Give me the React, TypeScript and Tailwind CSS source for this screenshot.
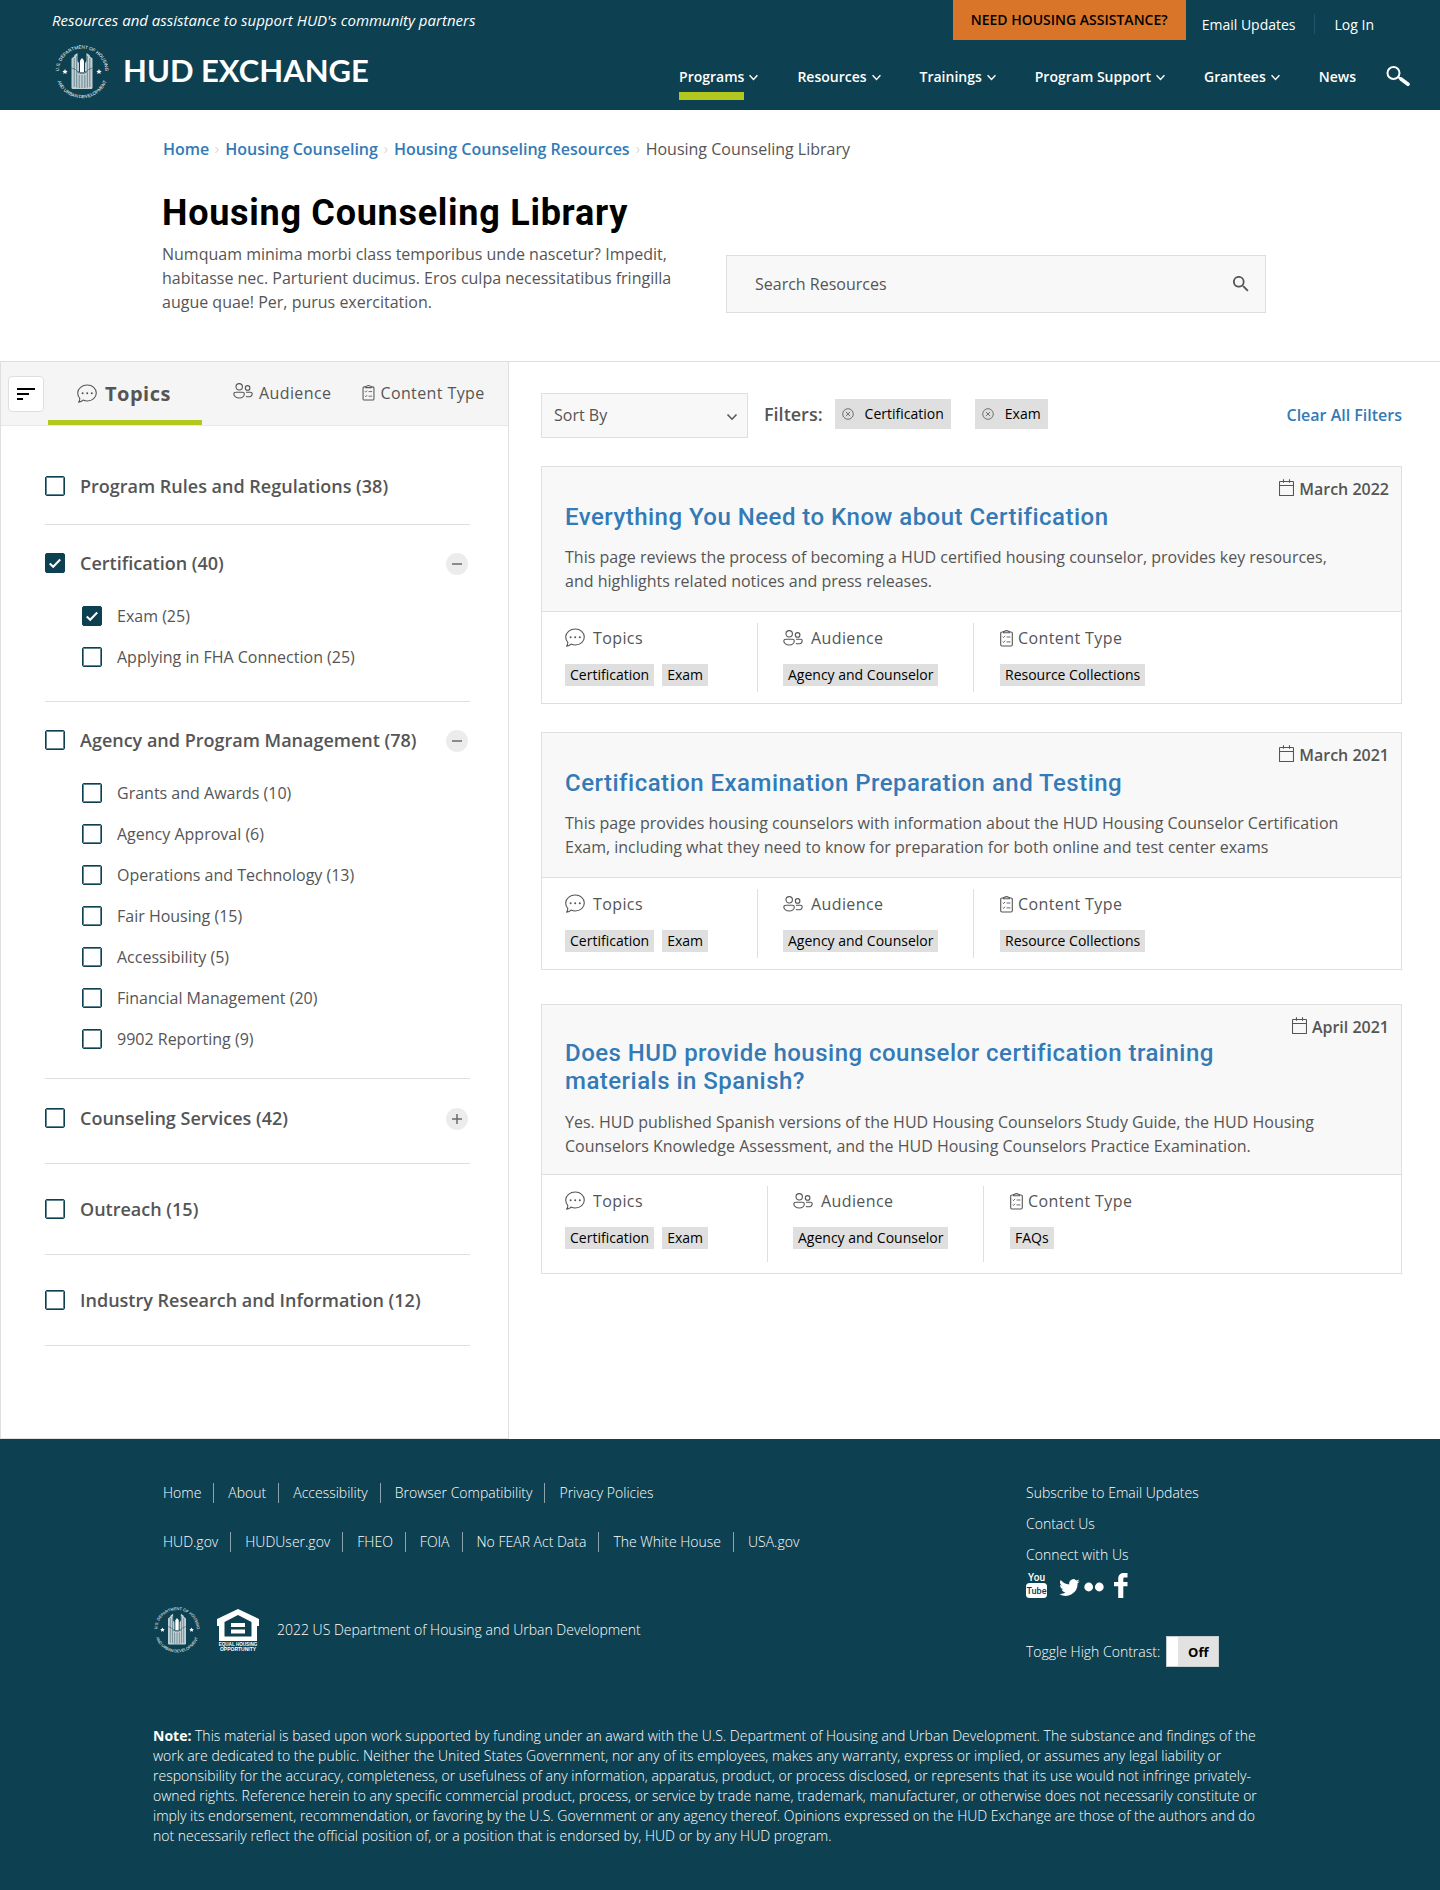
import React, { useState } from "react";

type IconProps = { className?: string };

function ChevronDown({ className }: IconProps) {
  return (
    <svg viewBox="0 0 12 8" className={className} fill="none" stroke="currentColor" aria-hidden="true">
      <path d="M1.500 1.500 6 6.200l4.500-4.700" strokeWidth="1.600" />
    </svg>
  );
}

function Magnifier({ className }: IconProps) {
  return (
    <svg viewBox="0 0 24 20" className={className} fill="none" stroke="currentColor" aria-hidden="true">
      <circle cx="7.500" cy="7" r="6" strokeWidth="2" />
      <path d="m12 11 2 1.500" strokeWidth="2" />
      <path d="m15 13 7 5.200" strokeWidth="3.600" strokeLinecap="round" />
    </svg>
  );
}

function SearchIcon({ className }: IconProps) {
  return (
    <svg viewBox="0 0 18 18" className={className} fill="currentColor" aria-hidden="true">
      <path d="M12.500 11h-.8l-.3-.3A6.500 6.500 0 1 0 10.700 11.400l.3.3v.8l5 5 1.500-1.500-5-5Zm-6 0a4.500 4.500 0 1 1 0-9 4.500 4.500 0 0 1 0 9Z" />
    </svg>
  );
}

function TopicsIcon({ className }: IconProps) {
  return (
    <svg viewBox="0 0 20 20" className={className} fill="none" stroke="currentColor" aria-hidden="true">
      <path
        d="M10.300 1C15.400 1 19.300 4.500 19.300 9s-3.900 8-9 8c-1.600 0-3-.3-4.200-.9-.9 1-2.500 1.900-4.500 2.100.9-1 1.300-2.300 1.200-3.900C1.500 12.900.7 11.100.7 9 .7 4.500 5.100 1 10.300 1Z"
        strokeWidth="1.100"
        strokeLinejoin="round"
      />
      <g fill="currentColor" stroke="none">
        <circle cx="5.600" cy="9.200" r="1" />
        <circle cx="10.200" cy="9.200" r="1" />
        <circle cx="14.800" cy="9.200" r="1" />
      </g>
    </svg>
  );
}

function AudienceIcon({ className }: IconProps) {
  return (
    <svg viewBox="0 0 20 16" className={className} fill="none" stroke="currentColor" strokeWidth="1.100" aria-hidden="true">
      <circle cx="6.200" cy="3.800" r="3.200" />
      <circle cx="14.600" cy="4.900" r="2.300" />
      <path d="M3.200 9.200h6.200c1.200 0 1.900.7 1.900 1.900 0 2.300-2.100 3.900-5 3.900S.8 13.400.8 11.100c0-1.200 1-1.900 2.400-1.900Z" />
      <path d="M13 9.200h4.500c1 0 1.700.6 1.700 1.500 0 2-1.700 3.100-4 3.100-.9 0-1.600-.1-2.300-.4" />
    </svg>
  );
}

function ContentTypeIcon({ className }: IconProps) {
  return (
    <svg viewBox="0 0 13 17" className={className} fill="none" stroke="currentColor" strokeWidth="1.100" aria-hidden="true">
      <path d="M3.600 2H2C1.200 2 .7 2.500.7 3.200v11.600c0 .7.500 1.200 1.300 1.200h9c.8 0 1.300-.5 1.300-1.200V3.200C12.300 2.500 11.800 2 11 2H9.400" />
      <path d="M3.600 2.800V1.600c.8 0 1.300-1 2.900-1s2.100 1 2.900 1v1.200Z" />
      <path d="m2.700 6.700.9.900 1.500-1.700M2.700 11.500l.9.900 1.500-1.700M6.600 7h3.800M6.600 11.900h3.800" strokeWidth=".9" />
    </svg>
  );
}

function CalendarIcon({ className }: IconProps) {
  return (
    <svg viewBox="0 0 15 17" className={className} fill="none" stroke="currentColor" strokeWidth="1.100" aria-hidden="true">
      <rect x=".5" y="2.500" width="14" height="14" rx=".5" />
      <path d="M.5 6.500h14M4.500.3v3.400M10.500.3v3.400" />
    </svg>
  );
}

function RemoveIcon({ className }: IconProps) {
  return (
    <svg viewBox="0 0 12 12" className={className} fill="none" stroke="currentColor" strokeWidth=".8" aria-hidden="true">
      <circle cx="6" cy="6" r="5.300" />
      <path d="m3.900 3.900 4.200 4.200M8.100 3.900 3.900 8.100" />
    </svg>
  );
}

function SortLinesIcon({ className }: IconProps) {
  return (
    <svg viewBox="0 0 18 12" className={className} fill="none" stroke="currentColor" strokeWidth="2" aria-hidden="true">
      <path d="M0 1h18M0 6h12M0 11h6" />
    </svg>
  );
}

function Seal({ className, id }: IconProps & { id: string }) {
  return (
    <svg viewBox="0 0 56 56" className={className} role="img" aria-label="U.S. Department of Housing and Urban Development seal">
      <defs>
        <path id={`${id}-top`} d="M5.500 34A23.300 23.300 0 1 1 50.500 34" />
        <path id={`${id}-bottom`} d="M1.800 28a26.200 26.200 0 0 0 52.400 0" />
      </defs>
      <g fill="currentColor" fontSize="4.600" fontFamily="Liberation Sans, sans-serif" textAnchor="middle">
        <text>
          <textPath href={`#${id}-top`} startOffset="50%">U.S. DEPARTMENT OF HOUSING</textPath>
        </text>
        <text>
          <textPath href={`#${id}-bottom`} startOffset="50%">AND URBAN DEVELOPMENT</textPath>
        </text>
      </g>
      <g fill="currentColor">
        <path opacity=".75" d="M17.500 14.500 20 12.500l.5-1.500 3-2v8l1.500 2v8l-1.500 1.500h9L31 27v-8l1.500-2V9l3 2 .5 1.500 2.500 2v29.700l-1 .8h-19l-1-.8Z" />
        <path d="M26 28V16.500l2-2.500 2 2.500V28Z" />
        <path d="m11 25 .8 1.700 1.900.2-1.400 1.300.4 1.900-1.700-1-1.700 1 .4-1.900-1.400-1.300 1.900-.2ZM45 25l.8 1.700 1.900.2-1.400 1.300.4 1.900-1.700-1-1.700 1 .4-1.900-1.400-1.300 1.900-.2Z" />
      </g>
      <g stroke="#0d4050" strokeWidth=".5" fill="none">
        <path d="M20.200 14v29M22.700 12v31.500M33.300 12v31.500M35.800 14v29M25.200 31v13M28 31v13M30.800 31v13" />
        <path d="m17.500 24 4 1.500 4 4h5l4-4 4-1.500" />
      </g>
    </svg>
  );
}

function EqualHousing({ className }: IconProps) {
  return (
    <svg viewBox="0 0 42 42" className={className} role="img" aria-label="Equal Housing Opportunity">
      <path
        fill="currentColor"
        fillRule="evenodd"
        d="M21 0 42 10v7h-2v15H2V17H0v-7ZM21 6 7.500 13v14.500h27V13Z"
      />
      <path fill="currentColor" d="M14 14h14v4H14ZM14 20.500h14v4H14Z" />
      <g fill="currentColor" fontFamily="Liberation Sans, sans-serif" fontWeight="700" textAnchor="middle">
        <text x="21" y="36.600" fontSize="4.600">EQUAL HOUSING</text>
        <text x="21" y="41.500" fontSize="5">OPPORTUNITY</text>
      </g>
    </svg>
  );
}

function YouTubeIcon({ className }: IconProps) {
  return (
    <svg viewBox="0 0 21 26" className={className} aria-hidden="true">
      <rect x="0" y="11" width="21" height="15" rx="3.500" fill="currentColor" />
      <g fontFamily="Roboto, sans-serif" fontWeight="500" textAnchor="middle">
        <text x="10.500" y="9" fontSize="10" fill="currentColor">You</text>
        <text x="10.500" y="22.200" fontSize="9" fill="#0d4050">Tube</text>
      </g>
    </svg>
  );
}

function TwitterIcon({ className }: IconProps) {
  return (
    <svg viewBox="0 0 24 20" className={className} fill="currentColor" aria-hidden="true">
      <path d="M23.950 2.600a10 10 0 0 1-2.800.8 4.900 4.900 0 0 0 2.150-2.700 9.800 9.800 0 0 1-3.100 1.200 4.900 4.900 0 0 0-8.400 4.500A14 14 0 0 1 1.700 1.200a4.900 4.900 0 0 0 1.500 6.600 4.900 4.900 0 0 1-2.200-.6 4.900 4.900 0 0 0 3.950 4.900 5 5 0 0 1-2.200.1 4.900 4.900 0 0 0 4.600 3.400A9.900 9.900 0 0 1 0 17.500a14 14 0 0 0 21.500-12.400 10 10 0 0 0 2.450-2.500Z" />
    </svg>
  );
}

function FlickrIcon({ className }: IconProps) {
  return (
    <svg viewBox="0 0 20 10" className={className} fill="currentColor" aria-hidden="true">
      <circle cx="4.700" cy="5" r="4.400" />
      <circle cx="15.300" cy="5" r="4.400" />
    </svg>
  );
}

function FacebookIcon({ className }: IconProps) {
  return (
    <svg viewBox="0 0 14 25" className={className} fill="currentColor" aria-hidden="true">
      <path d="M13.500 0v4.500h-2.700c-1.200 0-1.500.6-1.500 1.800V9h4.200v4.300H9.300V25H4.200V13.300H0V9h4.200V5.800C4.200 2 6.500 0 10 0Z" />
    </svg>
  );
}

const NAV = ["Programs", "Resources", "Trainings", "Program Support", "Grantees"];

function Header() {
  return (
    <header className="flex h-[110px] justify-between bg-[#0d4050] text-white">
      <div className="pl-[52px]">
        <p className="pt-[10px] text-[15px] font-medium italic leading-5">
          Resources and assistance to support HUD's community partners
        </p>
        <a href="#" className="ml-0.5 mt-[14px] flex items-center gap-[13px]">
          <Seal id="seal-header" className="size-[56px]" />
          <span className="pb-1 font-['Lato'] text-[31px] font-bold leading-8">HUD EXCHANGE</span>
        </a>
      </div>
      <div className="flex flex-col pr-[30px]">
        <div className="flex h-[51px] items-start justify-end pr-9 text-sm font-medium">
          <a href="#" className="flex h-10 items-center bg-[#d97529] px-[18px] font-semibold text-black">
            NEED HOUSING ASSISTANCE?
          </a>
          <a href="#" className="ml-4 mt-[15px] leading-5">Email Updates</a>
          <span className="ml-[18px] mt-[14px] h-5 w-px bg-[#24566a]" />
          <a href="#" className="ml-5 mt-[15px] leading-5">Log In</a>
        </div>
        <nav className="flex items-start gap-[38px] pt-4 text-sm font-semibold leading-5">
          {NAV.map((label, i) => (
            <a key={label} href="#" className="flex items-center gap-1">
              <span className="relative">
                {label}
                {i === 0 && <span className="absolute inset-x-0 top-[25px] h-2 bg-[#b2c81f]" />}
              </span>
              <ChevronDown className="h-[7px] w-[11px]" />
            </a>
          ))}
          <a href="#">News</a>
          <button type="button" aria-label="Search" className="-ml-2 -mt-px">
            <Magnifier className="h-5 w-6" />
          </button>
        </nav>
      </div>
    </header>
  );
}

const CRUMBS = ["Home", "Housing Counseling", "Housing Counseling Resources"];

function Intro() {
  return (
    <section className="px-[162px] pt-[27px]">
      <nav aria-label="Breadcrumb" className="flex items-center pl-px text-base leading-6">
        {CRUMBS.map((c) => (
          <React.Fragment key={c}>
            <a href="#" className="font-semibold text-[#337ab7]">{c}</a>
            <svg viewBox="0 0 4 8" className="mx-1.5 mt-0.5 h-2 w-1" fill="none" stroke="#cccccc" aria-hidden="true">
              <path d="m.5 1 2.700 3L.5 7" />
            </svg>
          </React.Fragment>
        ))}
        <span>Housing Counseling Library</span>
      </nav>
      <h1 className="mt-[30px] font-['Roboto'] text-4xl font-bold leading-[44px] tracking-[0.02em] text-black">
        Housing Counseling Library
      </h1>
      <div className="flex items-start justify-between pb-[47px] pr-3">
        <p className="mt-[7px] w-[520px] text-base leading-6">
          Numquam minima morbi class temporibus unde nascetur? Impedit, habitasse nec. Parturient ducimus. Eros culpa
          necessitatibus fringilla augue quae! Per, purus exercitation.
        </p>
        <div className="mt-5 flex h-[58px] w-[540px] items-center border border-[#dfdfdf] bg-[#f8f8f8] pr-4">
          <input
            type="search"
            aria-label="Search Resources"
            placeholder="Search Resources"
            className="h-full flex-1 bg-transparent pl-7 text-base outline-none placeholder:text-[#555555]"
          />
          <button type="button" aria-label="Search">
            <SearchIcon className="size-4" />
          </button>
        </div>
      </div>
    </section>
  );
}

type Child = { label: string; checked?: boolean };
type Group = { label: string; checked?: boolean; pad: string; kids?: Child[]; toggle?: "minus" | "plus" };

const GROUPS: Group[] = [
  { label: "Program Rules and Regulations (38)", pad: "pt-12 pb-[26px]" },
  {
    label: "Certification (40)",
    checked: true,
    pad: "pt-[26px] pb-6",
    toggle: "minus",
    kids: [{ label: "Exam (25)", checked: true }, { label: "Applying in FHA Connection (25)" }],
  },
  {
    label: "Agency and Program Management (78)",
    pad: "pt-[26px] pb-[19px]",
    toggle: "minus",
    kids: [
      { label: "Grants and Awards (10)" },
      { label: "Agency Approval (6)" },
      { label: "Operations and Technology (13)" },
      { label: "Fair Housing (15)" },
      { label: "Accessibility (5)" },
      { label: "Financial Management (20)" },
      { label: "9902 Reporting (9)" },
    ],
  },
  { label: "Counseling Services (42)", pad: "pt-[27px] pb-[33px]", toggle: "plus" },
  { label: "Outreach (15)", pad: "pt-[33px] pb-[33px]" },
  { label: "Industry Research and Information (12)", pad: "pt-[33px] pb-[33px]" },
];

function Check({ label, checked, bold }: { label: string; checked?: boolean; bold?: boolean }) {
  return (
    <label className="flex items-center gap-[15px]">
      <span className="relative size-5">
        <input
          type="checkbox"
          defaultChecked={checked}
          className="peer block size-5 appearance-none rounded-[2px] border border-[#0d4050] bg-white shadow-[inset_0_0_0_1px_#5f8590] checked:bg-[#0d4050] checked:shadow-none"
        />
        <svg
          viewBox="0 0 20 20"
          className="pointer-events-none absolute inset-0 hidden size-5 peer-checked:block"
          fill="none"
          stroke="#ffffff"
          strokeWidth="2"
          aria-hidden="true"
        >
          <path d="m4.700 10.500 3.500 3.300 7-7.300" />
        </svg>
      </span>
      <span className={bold ? "text-lg font-semibold leading-6" : "text-base leading-6"}>{label}</span>
    </label>
  );
}

function Sidebar() {
  return (
    <aside className="w-[509px] shrink-0 border-x border-b border-[#dfdfdf]">
      <div className="flex h-16 border-b border-[#e8e8e8] bg-[#f5f5f5] pl-[7px]">
        <button
          type="button"
          aria-label="Collapse filters"
          className="mt-[14px] flex size-9 items-center justify-center rounded border border-[#dfdfdf] bg-white text-black"
        >
          <SortLinesIcon className="h-3 w-[18px]" />
        </button>
        <div role="tablist" className="flex">
          <button
            type="button"
            role="tab"
            aria-selected="true"
            className="ml-1 flex w-[154px] items-center gap-2 border-b-[5px] border-[#b2c81f] pl-[29px] pt-1.5 text-xl font-bold tracking-wide"
          >
            <TopicsIcon className="size-5" />
            Topics
          </button>
          <button type="button" role="tab" aria-selected="false" className="ml-[31px] flex items-center gap-1.5 pb-px tracking-wide">
            <AudienceIcon className="mb-1 h-4 w-5" />
            Audience
          </button>
          <button type="button" role="tab" aria-selected="false" className="ml-[31px] flex items-center gap-[5px] pb-px tracking-wide">
            <ContentTypeIcon className="h-4 w-[13px]" />
            Content Type
          </button>
        </div>
      </div>
      <div className="pl-11 pr-[38px]">
        {GROUPS.map((g) => (
          <div key={g.label} className={`border-b border-[#dfdfdf] ${g.pad}`}>
            <div className="flex h-6 items-center justify-between pr-0.5">
              <Check label={g.label} checked={g.checked} bold />
              {g.toggle && (
                <button
                  type="button"
                  aria-label={g.toggle === "minus" ? "Collapse" : "Expand"}
                  className="mt-0.5 flex size-[22px] items-center justify-center rounded-full bg-[#ececec]"
                >
                  <svg viewBox="0 0 10 10" className="size-2.5" stroke="#6b6b6b" strokeWidth="1.500" aria-hidden="true">
                    <path d={g.toggle === "minus" ? "M0 5h10" : "M0 5h10M5 0v10"} />
                  </svg>
                </button>
              )}
            </div>
            {g.kids && (
              <ul className="mt-5 pl-[37px]">
                {g.kids.map((k) => (
                  <li key={k.label} className="flex h-[41px] items-center">
                    <Check label={k.label} checked={k.checked} />
                  </li>
                ))}
              </ul>
            )}
          </div>
        ))}
      </div>
    </aside>
  );
}

function Tag({ children }: { children: React.ReactNode }) {
  return <span className="flex h-[22px] items-center bg-[#dfdfdf] px-[5px] text-sm text-black">{children}</span>;
}

type Item = { date: string; title: string; body: string; type: string; tall?: boolean };

const ITEMS: Item[] = [
  {
    date: "March 2022",
    title: "Everything You Need to Know about Certification",
    body: "This page reviews the process of becoming a HUD certified housing counselor, provides key resources, and highlights related notices and press releases.",
    type: "Resource Collections",
  },
  {
    date: "March 2021",
    title: "Certification Examination Preparation and Testing",
    body: "This page provides housing counselors with information about the HUD Housing Counselor Certification Exam, including what they need to know for preparation for both online and test center exams",
    type: "Resource Collections",
  },
  {
    date: "April 2021",
    title: "Does HUD provide housing counselor certification training materials in Spanish?",
    body: "Yes. HUD published Spanish versions of the HUD Housing Counselors Study Guide, the HUD Housing Counselors Knowledge Assessment, and the HUD Housing Counselors Practice Examination.",
    type: "FAQs",
    tall: true,
  },
];

function Card({ item }: { item: Item }) {
  const t = item.tall;
  return (
    <article className={`border border-[#dfdfdf] ${t ? "mt-[34px]" : "mt-7"}`}>
      <div className={`border-b border-[#dfdfdf] bg-[#f8f8f8] pl-[23px] pr-3 pt-[10px] ${t ? "pb-4" : "pb-[18px]"}`}>
        <p className="flex items-center justify-end gap-[5px] text-base font-semibold leading-6">
          <CalendarIcon className="mb-1 h-[17px] w-[15px]" />
          {item.date}
        </p>
        <h2 className={`max-w-[680px] font-['Roboto'] text-2xl font-medium leading-7 tracking-[0.02em] ${t ? "" : "mt-0.5"}`}>
          <a href="#" className="text-[#337ab7]">{item.title}</a>
        </h2>
        <p className={`max-w-[790px] text-base leading-6 ${t ? "mt-[15px]" : "mt-[14px]"}`}>{item.body}</p>
      </div>
      <div className={`flex py-[11px] pl-[23px] ${t ? "h-[98px]" : "h-[91px]"}`}>
        <div className={`border-r border-[#dfdfdf] pt-[3px] ${t ? "w-[203px]" : "w-[193px]"}`}>
          <h3 className="flex items-center gap-2 text-base leading-6 tracking-wide">
            <TopicsIcon className="size-5" />
            Topics
          </h3>
          <div className="mt-[14px] flex gap-2">
            <Tag>Certification</Tag>
            <Tag>Exam</Tag>
          </div>
        </div>
        <div className="w-[216px] border-r border-[#dfdfdf] pl-[25px] pt-[3px]">
          <h3 className="flex items-center gap-2 text-base leading-6 tracking-wide">
            <AudienceIcon className="h-4 w-5" />
            Audience
          </h3>
          <div className="mt-[14px] flex">
            <Tag>Agency and Counselor</Tag>
          </div>
        </div>
        <div className="pl-[26px] pt-[3px]">
          <h3 className="flex items-center gap-[5px] text-base leading-6 tracking-wide">
            <ContentTypeIcon className="h-[17px] w-[13px]" />
            Content Type
          </h3>
          <div className="mt-[14px] flex">
            <Tag>{item.type}</Tag>
          </div>
        </div>
      </div>
    </article>
  );
}

function Results() {
  const [filters, setFilters] = useState(["Certification", "Exam"]);
  return (
    <main className="min-w-0 flex-1 pl-8 pr-[38px] pt-[31px]">
      <div className="flex h-[45px] items-center">
        <div className="relative h-full w-[207px]">
          <select
            aria-label="Sort By"
            className="h-full w-full appearance-none border border-[#dfdfdf] bg-[#f8f8f8] pb-0.5 pl-3 text-base outline-none"
          >
            <option>Sort By</option>
            <option>Date</option>
            <option>Title</option>
          </select>
          <ChevronDown className="pointer-events-none absolute right-2.5 top-5 h-2 w-3" />
        </div>
        <div className="mb-1 ml-4 flex items-center">
          <span className="text-lg font-semibold leading-6">Filters:</span>
          <div className="ml-3 flex gap-6">
            {filters.map((f) => (
              <button
                key={f}
                type="button"
                aria-label={`Remove filter ${f}`}
                onClick={() => setFilters(filters.filter((x) => x !== f))}
                className="flex h-[30px] items-center gap-[11px] bg-[#dfdfdf] px-[7px] text-sm text-black"
              >
                <RemoveIcon className="size-3 text-[#555555]" />
                {f}
              </button>
            ))}
          </div>
        </div>
        <button
          type="button"
          onClick={() => setFilters([])}
          className="mb-0.5 ml-auto text-base font-semibold text-[#337ab7]"
        >
          Clear All Filters
        </button>
      </div>
      {ITEMS.map((item) => (
        <Card key={item.title} item={item} />
      ))}
    </main>
  );
}

function LinkRow({ links }: { links: string[] }) {
  return (
    <ul className="flex items-center">
      {links.map((l, i) => (
        <li key={l} className="flex h-5 items-center">
          {i > 0 && <span className="ml-3 mr-[14px] h-5 w-px bg-[#8aa3ad]" />}
          <a href="#">{l}</a>
        </li>
      ))}
    </ul>
  );
}

function Footer() {
  const [high, setHigh] = useState(false);
  return (
    <footer className="bg-[#0d4050] px-[153px] pb-[44px] pt-[44px] text-sm font-light leading-5 text-white">
      <div className="flex justify-between">
        <div>
          <div className="pl-[10px]">
            <LinkRow links={["Home", "About", "Accessibility", "Browser Compatibility", "Privacy Policies"]} />
            <div className="mt-[29px]">
              <LinkRow links={["HUD.gov", "HUDUser.gov", "FHEO", "FOIA", "No FEAR Act Data", "The White House", "USA.gov"]} />
            </div>
          </div>
          <div className="mt-[54px] flex items-center">
            <Seal id="seal-footer" className="size-12" />
            <EqualHousing className="ml-4 size-[42px]" />
            <span className="ml-[18px]">2022 US Department of Housing and Urban Development</span>
          </div>
        </div>
        <div className="w-[261px]">
          <ul className="flex flex-col gap-[11px]">
            <li><a href="#">Subscribe to Email Updates</a></li>
            <li><a href="#">Contact Us</a></li>
            <li><a href="#">Connect with Us</a></li>
          </ul>
          <div className="mt-[7px] flex h-[26px] items-center">
            <a href="#" aria-label="YouTube"><YouTubeIcon className="h-[26px] w-[21px]" /></a>
            <a href="#" aria-label="Twitter" className="ml-3 mt-1"><TwitterIcon className="h-[17px] w-[21px]" /></a>
            <a href="#" aria-label="Flickr" className="ml-1 mt-1"><FlickrIcon className="h-[10px] w-5" /></a>
            <a href="#" aria-label="Facebook" className="ml-2.5"><FacebookIcon className="h-[25px] w-[14px]" /></a>
          </div>
          <div className="mt-[38px] flex items-center gap-1.5">
            <span id="contrast">Toggle High Contrast:</span>
            <button
              type="button"
              role="switch"
              aria-checked={high}
              aria-labelledby="contrast"
              onClick={() => setHigh(!high)}
              className="flex h-[31px] w-[53px] border border-[#c4cdd0] bg-[#e2e2e2] text-[13px] font-bold text-black"
            >
              <span className="h-full w-[11px] bg-white" />
              <span className="flex h-full flex-1 items-center justify-center">{high ? "On" : "Off"}</span>
            </button>
          </div>
        </div>
      </div>
      <p className="mt-[59px] max-w-[1120px]">
        <strong className="font-bold">Note:</strong> This material is based upon work supported by funding under an award
        with the U.S. Department of Housing and Urban Development. The substance and findings of the work are dedicated to
        the public. Neither the United States Government, nor any of its employees, makes any warranty, express or implied,
        or assumes any legal liability or responsibility for the accuracy, completeness, or usefulness of any information,
        apparatus, product, or process disclosed, or represents that its use would not infringe privately-owned rights.
        Reference herein to any specific commercial product, process, or service by trade name, trademark, manufacturer, or
        otherwise does not necessarily constitute or imply its endorsement, recommendation, or favoring by the U.S.
        Government or any agency thereof. Opinions expressed on the HUD Exchange are those of the authors and do not
        necessarily reflect the official position of, or a position that is endorsed by, HUD or by any HUD program.
      </p>
    </footer>
  );
}

export default function App() {
  return (
    <div className="bg-white font-['Open_Sans',sans-serif] text-[#555555]">
      <Header />
      <Intro />
      <div className="flex min-h-[1078px] border-t border-[#dfdfdf]">
        <Sidebar />
        <Results />
      </div>
      <Footer />
    </div>
  );
}
